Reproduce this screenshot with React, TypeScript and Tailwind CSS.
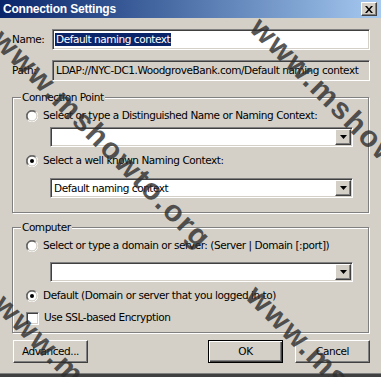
import React from "react";

const sunken =
  "border border-t-[#808080] border-l-[#808080] border-r-white border-b-white shadow-[inset_1px_1px_0_#404040,inset_-1px_-1px_0_#d4d0c8]";
const raised =
  "border border-t-white border-l-white border-r-[#404040] border-b-[#404040] shadow-[inset_-1px_-1px_0_#808080]";

function Radio({ checked = false }: { checked?: boolean }) {
  return (
    <svg width="12" height="12" viewBox="0 0 12 12" className="shrink-0">
      <circle cx="6" cy="6" r="4.5" fill="white" />
      <path d="M1.76 10.24 A6 6 0 0 1 10.24 1.76" fill="none" stroke="#808080" strokeWidth="1" />
      <path d="M10.24 1.76 A6 6 0 0 1 1.76 10.24" fill="none" stroke="white" strokeWidth="1" />
      <path d="M2.46 9.54 A5 5 0 0 1 9.54 2.46" fill="none" stroke="#404040" strokeWidth="1" />
      <path d="M9.54 2.46 A5 5 0 0 1 2.46 9.54" fill="none" stroke="#d4d0c8" strokeWidth="1" />
      {checked && <circle cx="6" cy="6" r="2" fill="black" />}
    </svg>
  );
}

function Combo({ value = "" }: { value?: string }) {
  return (
    <div className={`ml-[24px] flex h-[20px] w-[303px] items-center bg-white ${sunken}`}>
      <span className="flex-1 pl-[3px] leading-[13px]">{value}</span>
      <div className={`mr-[1px] flex h-[16px] w-[16px] items-center justify-center bg-[#d4d0c8] ${raised}`}>
        <svg width="7" height="4" viewBox="0 0 7 4">
          <polygon points="0,0 7,0 3.5,4" fill="black" />
        </svg>
      </div>
    </div>
  );
}

function Option({ label, checked }: { label: string; checked?: boolean }) {
  return (
    <div className="flex h-[14px] items-center gap-[5px]">
      <Radio checked={checked} />
      <span className="whitespace-nowrap">{label}</span>
    </div>
  );
}

function Group({ title, children, className = "" }: { title: string; children: React.ReactNode; className?: string }) {
  return (
    <div
      className={`relative ml-[12px] w-[357px] border border-[#808080] pl-[13px] shadow-[inset_1px_1px_0_white,1px_1px_0_white] ${className}`}
    >
      <span className="absolute -top-[7px] left-[8px] bg-[#d4d0c8] px-[1px] leading-[12px]">{title}</span>
      {children}
    </div>
  );
}

function Button({ label, isDefault }: { label: string; isDefault?: boolean }) {
  const frame = isDefault
    ? "border border-black shadow-[inset_1px_1px_0_white,inset_-1px_-1px_0_#404040,inset_-2px_-2px_0_#808080]"
    : raised;
  return (
    <div className={`flex h-[23px] w-[75px] items-center justify-center bg-[#d4d0c8] ${frame}`}>
      {label}
    </div>
  );
}

const mark = "pointer-events-none absolute origin-top-left rotate-45 whitespace-nowrap font-['Liberation_Sans',sans-serif] text-[30px] font-bold leading-[30px] tracking-[2px] text-[#2e2e2e] opacity-80";

export default function App() {
  return (
    <div className="relative flex h-[377px] w-[381px] flex-col overflow-hidden bg-[#d4d0c8] font-['DejaVu_Sans',sans-serif] text-[10.5px] tracking-[-0.45px] text-black">
      {/* title bar */}
      <div className="flex h-[18px] items-center bg-gradient-to-r from-[#0a246a] to-[#a6caf0] pl-[3px] pr-[4px]">
        <span className="font-['Liberation_Sans',sans-serif] text-[12px] font-bold tracking-[-0.2px] text-white">
          Connection Settings
        </span>
        <div className={`ml-auto flex h-[14px] w-[16px] items-center justify-center bg-[#d4d0c8] ${raised}`}>
          <svg width="8" height="7" viewBox="0 0 8 7">
            <path d="M0 0 L2 0 L4 2.5 L6 0 L8 0 L5 3.5 L8 7 L6 7 L4 4.5 L2 7 L0 7 L3 3.5 Z" fill="black" />
          </svg>
        </div>
      </div>

      {/* name */}
      <div className="mt-[11px] flex h-[21px] items-center pl-[12px]">
        <span className="w-[40px]">Name:</span>
        <div className={`flex h-[21px] w-[318px] items-center bg-white pl-[2px] ${sunken}`}>
          <span className="bg-[#0a246a] px-[1px] leading-[13px] text-white">Default naming context</span>
        </div>
      </div>

      {/* path */}
      <div className="mt-[10px] flex h-[21px] items-center pl-[12px]">
        <span className="w-[40px]">Path:</span>
        <div className={`flex h-[21px] w-[318px] items-center bg-[#d4d0c8] pl-[3px] ${sunken}`}>
          LDAP://NYC-DC1.WoodgroveBank.com/Default naming context
        </div>
      </div>

      <Group title="Connection Point" className="mt-[16px] pb-[14px]">
        <div className="mt-[11px]">
          <Option label="Select or type a Distinguished Name or Naming Context:" />
        </div>
        <div className="mt-[4px]">
          <Combo />
        </div>
        <div className="mt-[7px]">
          <Option label="Select a well known Naming Context:" checked />
        </div>
        <div className="mt-[10px]">
          <Combo value="Default naming context" />
        </div>
      </Group>

      <Group title="Computer" className="mt-[14px] pb-[7px]">
        <div className="mt-[11px]">
          <Option label="Select or type a domain or server: (Server | Domain [:port])" />
        </div>
        <div className="mt-[9px]">
          <Combo />
        </div>
        <div className="mt-[7px]">
          <Option label="Default (Domain or server that you logged in to)" checked />
        </div>
        <div className="mt-[8px] flex h-[14px] items-center gap-[5px]">
          <div className={`h-[13px] w-[13px] shrink-0 bg-white ${sunken}`} />
          <span>Use SSL-based Encryption</span>
        </div>
      </Group>

      <div className="mt-[7px] flex">
        <div className="ml-[13px]">
          <Button label="Advanced..." />
        </div>
        <div className="ml-[120px]">
          <Button label="OK" isDefault />
        </div>
        <div className="ml-[12px]">
          <Button label="Cancel" />
        </div>
      </div>

      <div className="mt-auto h-[4px] border-t border-[#808080] bg-[#404040]" />

      {/* watermark */}
      <span className={`${mark} left-[8px] top-[24px]`}>www.mshowto.org</span>
      <span className={`${mark} left-[262px] top-[280px]`}>www.mshowto.org</span>
      <span className={`${mark} left-[266px] top-[12px]`}>www.mshowto.org</span>
      <span className={`${mark} left-[10px] top-[289px]`}>www.mshowto.org</span>
    </div>
  );
}
